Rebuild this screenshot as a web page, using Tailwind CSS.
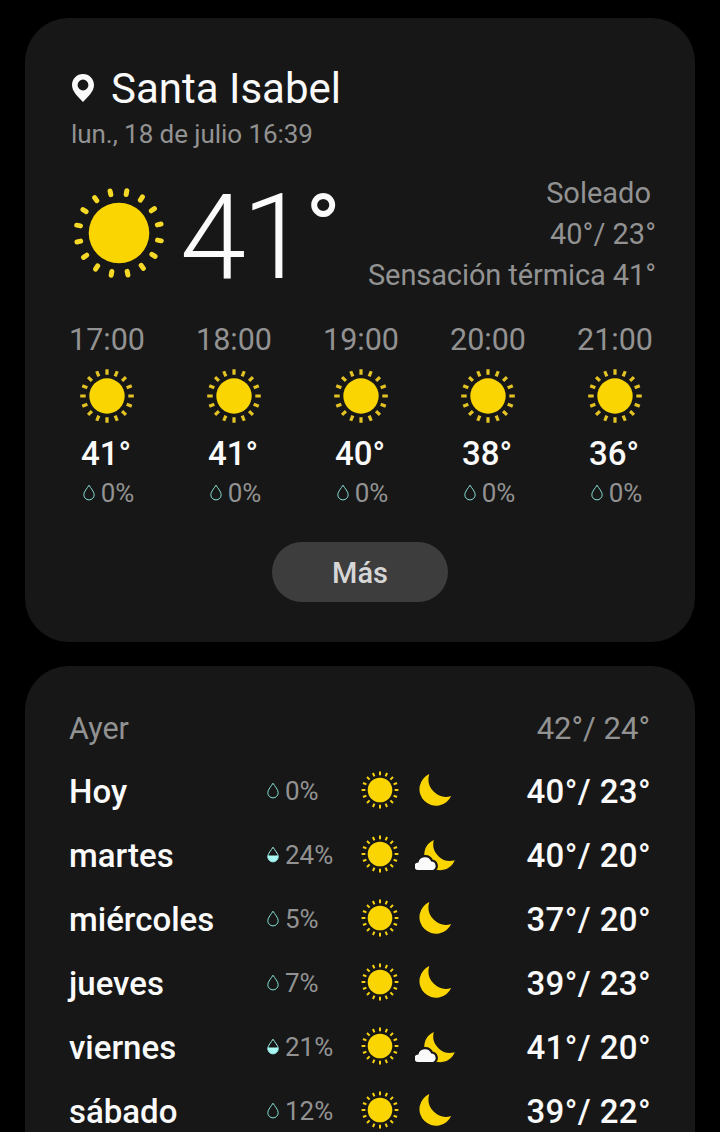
<!DOCTYPE html>
<html lang="es">
  <head>
    <meta charset="UTF-8" />
    <meta name="viewport" content="width=device-width, initial-scale=1.0" />
    <script src="https://cdn.jsdelivr.net/npm/@tailwindcss/browser@4"></script>
    <title>Santa Isabel</title>
  </head>

  <body class="bg-black font-['Roboto',sans-serif] text-[#fafafa]">
    <!-- iconos -->
    <svg class="hidden">
      <defs>
        <g id="rays-lg" fill="none" stroke="#f5d926" stroke-width="5" stroke-linecap="round">
          <path d="M0-39.2V-43M0 39.2V43M-39.2 0H-43M39.2 0H43" />
        </g>
        <g id="rays-md" fill="none" stroke="#e3c324" stroke-width="3.2">
          <path d="M0-21.3V-26.8M0 21.3V26.8M-21.3 0H-26.8M21.3 0H26.8" />
        </g>
        <g id="rays-sm" fill="none" stroke="#f5d210" stroke-width="2">
          <path d="M0-14.7V-18.4M0 14.7V18.4M-14.7 0H-18.4M14.7 0H18.4" />
        </g>
        <symbol id="sun-lg" viewBox="-46 -46 92 92">
          <circle r="30.3" fill="#fad502" />
          <use href="#rays-lg" transform="rotate(10.5)" />
          <use href="#rays-lg" transform="rotate(33)" />
          <use href="#rays-lg" transform="rotate(55.5)" />
          <use href="#rays-lg" transform="rotate(78)" />
        </symbol>
        <symbol id="sun-md" viewBox="-27 -27 54 54">
          <circle r="17.7" fill="#fad502" />
          <use href="#rays-md" />
          <use href="#rays-md" transform="rotate(22.5)" />
          <use href="#rays-md" transform="rotate(45)" />
          <use href="#rays-md" transform="rotate(67.5)" />
        </symbol>
        <symbol id="sun-sm" viewBox="-19 -19 38 38">
          <circle r="12.3" fill="#fad502" />
          <use href="#rays-sm" />
          <use href="#rays-sm" transform="rotate(22.5)" />
          <use href="#rays-sm" transform="rotate(45)" />
          <use href="#rays-sm" transform="rotate(67.5)" />
        </symbol>
        <symbol id="moon" viewBox="0 0 42 36">
          <path d="M14.3 2A16.6 16.6 0 1 0 36.2 24A17.6 17.6 0 0 1 14.3 2Z" fill="#fad502" />
        </symbol>
        <symbol id="moon-cloud" viewBox="0 0 42 36">
          <path d="M18.8 3.9A15.8 15.8 0 1 0 39.8 24.2A16.8 16.8 0 0 1 18.8 3.9Z" fill="#fad502" />
          <path
            d="M3.4 34A3.9 3.7 0 0 1 3.4 26.6A6.7 6.7 0 0 1 16.2 25.6A4.3 4.3 0 0 1 17.6 34Z"
            fill="#fafafa"
            stroke="#171717"
            stroke-width="4.6"
            paint-order="stroke"
          />
        </symbol>
        <symbol id="drop" viewBox="0 0 12 17">
          <path d="M6 1.2C4.4 4 .8 7.6.8 10.7A5.2 5.2 0 0 0 11.2 10.7C11.2 7.6 7.6 4 6 1.2Z" fill="none" stroke="#86e0d6" />
        </symbol>
        <symbol id="drop-half" viewBox="0 0 12 17">
          <path d="M.6 9.500H11.4A5.4 6 0 0 1 .6 10Z" fill="#a8fbf4" />
          <path d="M6 1.2C4.4 4 .8 7.6.8 10.7A5.2 5.2 0 0 0 11.2 10.7C11.2 7.6 7.6 4 6 1.2Z" fill="none" stroke="#9df0e8" />
        </symbol>
      </defs>
    </svg>

    <main class="h-[1132px] overflow-hidden px-[25px] pt-[18px]">
      <!-- tiempo actual -->
      <section class="h-[624px] rounded-[44px] bg-[#171717] pt-[46px]">
        <div class="flex h-12 items-center pl-[47px]">
          <svg class="h-[28px] w-[22px]" viewBox="0 0 22 28">
            <path
              fill="#fafafa"
              fill-rule="evenodd"
              d="M11 0C4.900 0 0 4.900 0 11C0 17.500 6 22.500 11 28C16 22.500 22 17.500 22 11C22 4.900 17.100 0 11 0ZM11 5.600A5.400 5.400 0 1 1 11 16.400A5.400 5.400 0 1 1 11 5.600Z"
            />
          </svg>
          <h1 class="ml-[17px] pt-[2px] text-[42px] leading-[48px]">Santa Isabel</h1>
        </div>
        <p class="ml-[46px] mt-[7px] text-[26px] leading-[30px] tracking-[-0.06px] text-[#929292]">lun., 18 de julio 16:39</p>

        <div class="mt-[24px] flex h-[124px] items-start justify-between pl-[48px] pr-[39px]">
          <div class="flex">
            <svg class="mt-[14px] size-[92px]"><use href="#sun-lg" /></svg>
            <div class="ml-[15px] flex font-light">
              <span class="pt-px text-[119px] leading-[128px] tracking-[-4px]">41</span>
              <span class="ml-[1px] pt-[6px] text-[97px] font-normal leading-[100px]">°</span>
            </div>
          </div>
          <div class="text-right text-[29px] leading-[41px] text-[#929292]">
            <p class="pr-[5px]">Soleado</p>
            <p>40°/ 23°</p>
            <p class="tracking-[-0.1px]">Sensación térmica 41°</p>
          </div>
        </div>

        <!-- por horas -->
        <div class="mt-[24px] grid grid-cols-[repeat(5,127px)] pl-[18.500px]">
          <div class="flex flex-col items-center">
            <span class="text-[30.5px] leading-[38px] text-[#929292]">17:00</span>
            <svg class="mt-[10px] size-[54px]"><use href="#sun-md" /></svg>
            <span class="mt-[11px] pr-[2px] text-[33px] font-medium leading-[40px]">41°</span>
            <div class="mt-[3px] flex items-center gap-[6px] pl-[3px] text-[26px] leading-[32px] text-[#929292]">
              <svg class="mb-[2px] h-[17px] w-3"><use href="#drop" /></svg>0%
            </div>
          </div>
          <div class="flex flex-col items-center">
            <span class="text-[30.5px] leading-[38px] text-[#929292]">18:00</span>
            <svg class="mt-[10px] size-[54px]"><use href="#sun-md" /></svg>
            <span class="mt-[11px] pr-[2px] text-[33px] font-medium leading-[40px]">41°</span>
            <div class="mt-[3px] flex items-center gap-[6px] pl-[3px] text-[26px] leading-[32px] text-[#929292]">
              <svg class="mb-[2px] h-[17px] w-3"><use href="#drop" /></svg>0%
            </div>
          </div>
          <div class="flex flex-col items-center">
            <span class="text-[30.5px] leading-[38px] text-[#929292]">19:00</span>
            <svg class="mt-[10px] size-[54px]"><use href="#sun-md" /></svg>
            <span class="mt-[11px] pr-[2px] text-[33px] font-medium leading-[40px]">40°</span>
            <div class="mt-[3px] flex items-center gap-[6px] pl-[3px] text-[26px] leading-[32px] text-[#929292]">
              <svg class="mb-[2px] h-[17px] w-3"><use href="#drop" /></svg>0%
            </div>
          </div>
          <div class="flex flex-col items-center">
            <span class="text-[30.5px] leading-[38px] text-[#929292]">20:00</span>
            <svg class="mt-[10px] size-[54px]"><use href="#sun-md" /></svg>
            <span class="mt-[11px] pr-[2px] text-[33px] font-medium leading-[40px]">38°</span>
            <div class="mt-[3px] flex items-center gap-[6px] pl-[3px] text-[26px] leading-[32px] text-[#929292]">
              <svg class="mb-[2px] h-[17px] w-3"><use href="#drop" /></svg>0%
            </div>
          </div>
          <div class="flex flex-col items-center">
            <span class="text-[30.5px] leading-[38px] text-[#929292]">21:00</span>
            <svg class="mt-[10px] size-[54px]"><use href="#sun-md" /></svg>
            <span class="mt-[11px] pr-[2px] text-[33px] font-medium leading-[40px]">36°</span>
            <div class="mt-[3px] flex items-center gap-[6px] pl-[3px] text-[26px] leading-[32px] text-[#929292]">
              <svg class="mb-[2px] h-[17px] w-3"><use href="#drop" /></svg>0%
            </div>
          </div>
        </div>

        <button type="button" class="mx-auto mt-[33px] block h-[60px] w-[176px] rounded-full bg-[#3d3d3d] pt-[3px] text-[29px] font-medium text-[#d6d6d6]">
          Más
        </button>
      </section>

      <!-- por días -->
      <section class="mt-6 h-[520px] rounded-t-[44px] bg-[#171717] pl-[44px] pr-[45px] pt-[30px]">
        <div class="flex h-16 items-center justify-between pt-[2px] text-[30.5px] text-[#929292]">
          <span>Ayer</span>
          <span class="text-[31px]">42°/ 24°</span>
        </div>
        <div class="flex h-16 items-center text-[33px] font-medium">
          <span class="w-[198px]">Hoy</span>
          <svg class="mb-[3px] h-[17px] w-3"><use href="#drop" /></svg>
          <span class="mb-[2px] ml-[6px] w-[76px] text-[26px] font-normal text-[#929292]">0%</span>
          <svg class="mb-1 size-[38px]"><use href="#sun-sm" /></svg>
          <svg class="mb-1 ml-[16px] h-9 w-[42px]"><use href="#moon" /></svg>
          <span class="-mr-px ml-auto tracking-[0.4px]">40°/ 23°</span>
        </div>
        <div class="flex h-16 items-center text-[33px] font-medium">
          <span class="w-[198px]">martes</span>
          <svg class="mb-[3px] h-[17px] w-3"><use href="#drop-half" /></svg>
          <span class="mb-[2px] ml-[6px] w-[76px] text-[26px] font-normal text-[#929292]">24%</span>
          <svg class="mb-1 size-[38px]"><use href="#sun-sm" /></svg>
          <svg class="mb-1 ml-[16px] h-9 w-[42px]"><use href="#moon-cloud" /></svg>
          <span class="-mr-px ml-auto tracking-[0.4px]">40°/ 20°</span>
        </div>
        <div class="flex h-16 items-center text-[33px] font-medium">
          <span class="w-[198px]">miércoles</span>
          <svg class="mb-[3px] h-[17px] w-3"><use href="#drop" /></svg>
          <span class="mb-[2px] ml-[6px] w-[76px] text-[26px] font-normal text-[#929292]">5%</span>
          <svg class="mb-1 size-[38px]"><use href="#sun-sm" /></svg>
          <svg class="mb-1 ml-[16px] h-9 w-[42px]"><use href="#moon" /></svg>
          <span class="-mr-px ml-auto tracking-[0.4px]">37°/ 20°</span>
        </div>
        <div class="flex h-16 items-center text-[33px] font-medium">
          <span class="w-[198px]">jueves</span>
          <svg class="mb-[3px] h-[17px] w-3"><use href="#drop" /></svg>
          <span class="mb-[2px] ml-[6px] w-[76px] text-[26px] font-normal text-[#929292]">7%</span>
          <svg class="mb-1 size-[38px]"><use href="#sun-sm" /></svg>
          <svg class="mb-1 ml-[16px] h-9 w-[42px]"><use href="#moon" /></svg>
          <span class="-mr-px ml-auto tracking-[0.4px]">39°/ 23°</span>
        </div>
        <div class="flex h-16 items-center text-[33px] font-medium">
          <span class="w-[198px]">viernes</span>
          <svg class="mb-[3px] h-[17px] w-3"><use href="#drop-half" /></svg>
          <span class="mb-[2px] ml-[6px] w-[76px] text-[26px] font-normal text-[#929292]">21%</span>
          <svg class="mb-1 size-[38px]"><use href="#sun-sm" /></svg>
          <svg class="mb-1 ml-[16px] h-9 w-[42px]"><use href="#moon-cloud" /></svg>
          <span class="-mr-px ml-auto tracking-[0.4px]">41°/ 20°</span>
        </div>
        <div class="flex h-16 items-center text-[33px] font-medium">
          <span class="w-[198px]">sábado</span>
          <svg class="mb-[3px] h-[17px] w-3"><use href="#drop" /></svg>
          <span class="mb-[2px] ml-[6px] w-[76px] text-[26px] font-normal text-[#929292]">12%</span>
          <svg class="mb-1 size-[38px]"><use href="#sun-sm" /></svg>
          <svg class="mb-1 ml-[16px] h-9 w-[42px]"><use href="#moon" /></svg>
          <span class="-mr-px ml-auto tracking-[0.4px]">39°/ 22°</span>
        </div>
      </section>
    </main>
  </body>
</html>
